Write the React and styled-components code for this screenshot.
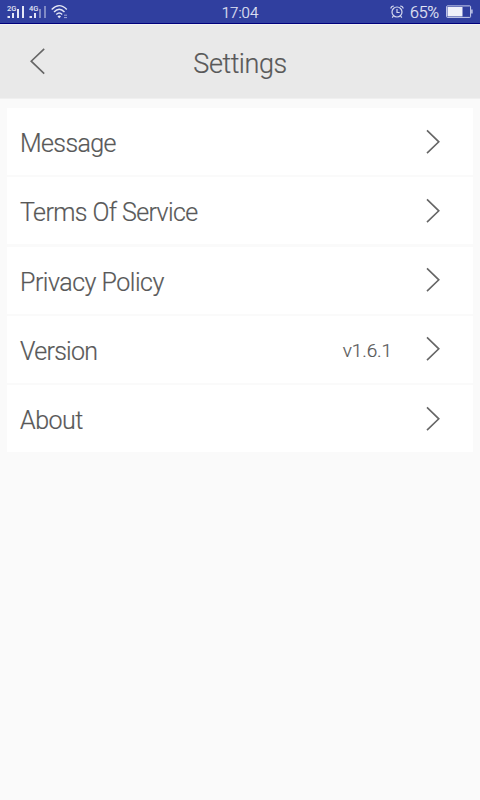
import React from 'react';
import styled, { createGlobalStyle } from 'styled-components';

const GlobalStyle = createGlobalStyle`
  * { box-sizing: border-box; }
  html, body { margin: 0; background: #fafafa; }
  body { font-family: Roboto, "Liberation Sans", sans-serif; font-weight: 300; color: #585858; -webkit-text-stroke: 0.2px; }
`;

const Screen = styled.div`
  width: 480px;
  height: 800px;
  background: #fafafa;
  overflow: hidden;
`;

const StatusBar = styled.div`
  display: grid;
  grid-template-columns: 1fr auto 1fr;
  align-items: center;
  height: 24px;
  padding: 0 7px;
  background: #303f9f;
  border-bottom: 1px solid #00007c;
  color: #e3e6f5;
`;

const StatusGroup = styled.div`
  display: flex;
  align-items: center;
  justify-content: ${(p) => (p.$end ? 'flex-end' : 'flex-start')};
`;

const StatusText = styled.span`
  font-size: 15px;
  line-height: 20px;
  padding-top: 3px;
`;

const BatteryText = styled(StatusText)`
  margin: 0 7px 0 6px;
  padding-top: 2px;
  font-size: 16px;
  letter-spacing: -0.2px;
`;

const Header = styled.header`
  display: grid;
  grid-template-columns: 76px 1fr 76px;
  align-items: center;
  height: 75px;
  background: #e9e9e9;
  border-top: 1px solid #f3f3f3;
  border-bottom: 1px solid #f0f0f0;
`;

const BackButton = styled.button`
  display: flex;
  width: 76px;
  height: 72px;
  padding: 21px 0 0 29px;
  border: 0;
  background: none;
`;

const Title = styled.h1`
  margin: 0;
  padding-top: 4px;
  text-align: center;
  font-size: 27px;
  line-height: 36px;
  font-weight: 300;
  letter-spacing: -0.45px;
`;

const List = styled.main`
  display: grid;
  grid-template-rows: repeat(5, 67px);
  row-gap: 2.3px;
  padding: 9px 7px 0;
`;

const Row = styled.div`
  display: flex;
  align-items: center;
  padding: 0 33px 0 13px;
  background: #fff;
`;

const Label = styled.span`
  flex: 1;
  padding-top: 5px;
  font-size: 25px;
  line-height: 32px;
  letter-spacing: ${(p) => p.$spacing}px;
`;

const Value = styled.span`
  margin-right: 34px;
  padding-top: 3px;
  font-size: 19px;
  line-height: 26px;
  letter-spacing: -0.1px;
`;

const Signal = ({ label, dim }) => (
  <svg width="22" height="18" viewBox="0 0 22 18" fill="#e3e6f5">
    <text x="0" y="7.5" fontSize="7.5" fontWeight="500" fontFamily="Roboto, sans-serif">{label}</text>
    <rect x="0.5" y="13" width="2.5" height="2" />
    <rect x="5" y="10" width="2" height="5" />
    <rect x="10" y="6" width="2" height="9" opacity={dim ? 0.45 : 1} />
    <rect x="15" y="3" width="2" height="12" opacity={dim ? 0.45 : 1} />
  </svg>
);

const Wifi = () => (
  <svg width="18" height="16" viewBox="0 0 18 16" fill="none" stroke="#e3e6f5" strokeWidth="1.4">
    <path d="M.7 5.5Q8.2-2.3 15.8 5.5M3 8Q8.2 2.5 13.5 8M5.3 10.4Q8.2 7.5 11.2 10.4" />
    <path d="M6.5 12.4Q8.2 10.8 10 12.4L8.2 14.3Z" fill="#e3e6f5" stroke="none" />
    <path d="M13 11.2h3M13 13.6h3" strokeWidth="1" opacity=".65" />
  </svg>
);

const Alarm = () => (
  <svg width="14" height="14" viewBox="0 0 14 14" fill="none" stroke="#d5d9ee" strokeWidth="1.2">
    <circle cx="7" cy="7" r="5" />
    <path d="M7 4v3.5h2.7M.8 3.5Q1.2 1.2 3.8 1M13.2 3.5Q12.8 1.2 10.2 1M3.4 11l-1.2 1.7M10.6 11l1.2 1.7" />
  </svg>
);

const Battery = () => (
  <svg width="27" height="14" viewBox="0 0 27 14">
    <rect x=".6" y=".9" width="24" height="11.5" rx=".8" fill="none" stroke="#cbd0ed" strokeWidth="1" />
    <path d="M1.5 2h15v9.4h-15z" fill="#f0f1fa" />
    <path d="M25.2 4.5h1.4v4h-1.4z" fill="#cbd0ed" />
  </svg>
);

const Chevron = ({ back }) => (
  <svg width={back ? 17 : 14} height={back ? 28 : 26} viewBox={back ? '0 0 17 28' : '0 0 14 26'} fill="none" stroke="#666" strokeWidth="1.6">
    <path d={back ? 'M15.2 1.8L2.2 14.2L15.2 26.6' : 'M1 1.4L12.8 12.8L1 24.2'} />
  </svg>
);

const items = [
  { label: 'Message', spacing: -0.6 },
  { label: 'Terms Of Service', spacing: -0.6 },
  { label: 'Privacy Policy', spacing: -0.5 },
  { label: 'Version', value: 'v1.6.1', spacing: -0.7 },
  { label: 'About', spacing: -0.5 },
];

export default function App() {
  return (
    <Screen>
      <GlobalStyle />
      <StatusBar>
        <StatusGroup>
          <Signal label="2G" />
          <Signal label="4G" dim />
          <Wifi />
        </StatusGroup>
        <StatusText>17:04</StatusText>
        <StatusGroup $end>
          <Alarm />
          <BatteryText>65%</BatteryText>
          <Battery />
        </StatusGroup>
      </StatusBar>
      <Header>
        <BackButton aria-label="Back"><Chevron back /></BackButton>
        <Title>Settings</Title>
      </Header>
      <List>
        {items.map((item) => (
          <Row key={item.label}>
            <Label $spacing={item.spacing}>{item.label}</Label>
            {item.value && <Value>{item.value}</Value>}
            <Chevron />
          </Row>
        ))}
      </List>
    </Screen>
  );
}
